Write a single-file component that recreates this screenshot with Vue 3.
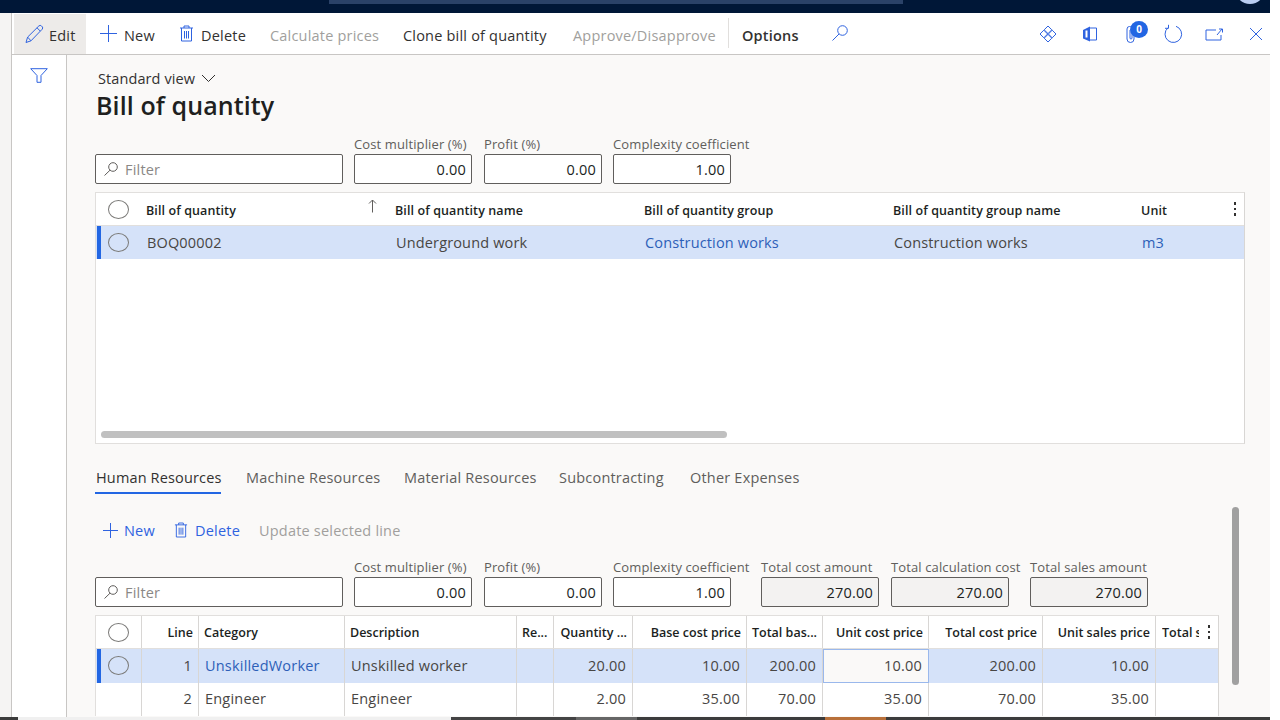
<script setup>
const tools = [
  { label: 'Calculate prices', off: true },
  { label: 'Clone bill of quantity' },
  { label: 'Approve/Disapprove', off: true },
]
const topCols = ['Bill of quantity name', 'Bill of quantity group', 'Bill of quantity group name']
const tabs = ['Human Resources', 'Machine Resources', 'Material Resources', 'Subcontracting', 'Other Expenses']
const fields = [
  { label: 'Cost multiplier (%)', value: '0.00' },
  { label: 'Profit (%)', value: '0.00' },
  { label: 'Complexity coefficient', value: '1.00' },
]
const totals = [
  { label: 'Total cost amount', value: '270.00' },
  { label: 'Total calculation cost', value: '270.00' },
  { label: 'Total sales amount', value: '270.00' },
]
const lineHead = [
  { t: 'Line', r: true }, { t: 'Category' }, { t: 'Description' }, { t: 'Re...' },
  { t: 'Quantity ...', r: true }, { t: 'Base cost price', r: true }, { t: 'Total bas...', r: true },
  { t: 'Unit cost price', r: true }, { t: 'Total cost price', r: true }, { t: 'Unit sales price', r: true },
]
const lines = [
  ['1', 'UnskilledWorker', 'Unskilled worker', '', '20.00', '10.00', '200.00', '10.00', '200.00', '10.00'],
  ['2', 'Engineer', 'Engineer', '', '2.00', '35.00', '70.00', '35.00', '70.00', '35.00'],
]
const numeric = (i) => i === 0 || i >= 4
</script>

<template>
  <div class="app">
    <header class="topbar"><span class="topsearch"></span><span class="avatar"></span></header>
    <div class="shell">
      <div class="strip"></div>
      <div class="page">
        <div class="toolbar">
          <div class="tools">
            <button class="tool edit">
              <svg width="20" height="20" viewBox="0 0 20 20"><path d="M2 18.500l1.600-5.400L14.800 2a1.900 1.900 0 0 1 2.700 0l.6.600a1.900 1.900 0 0 1 0 2.700L7 16.800zM3.600 13.100l3.400 3.700M13 3.800l3.300 3.300" /></svg>
              <span>Edit</span>
            </button>
            <button class="tool new">
              <svg width="19" height="19" viewBox="0 0 19 19"><path d="M9.500 1v17M1 9.500h17" /></svg>
              <span>New</span>
            </button>
            <button class="tool del">
              <svg width="15" height="17" viewBox="0 0 15 17"><path d="M1 3h13M5 3V1h5v2M2.500 3v13h10V3M5.500 6v7.500M7.500 6v7.500M9.500 6v7.500" /></svg>
              <span>Delete</span>
            </button>
            <button v-for="t in tools" :key="t.label" class="tool" :class="{ off: t.off }"><span>{{ t.label }}</span></button>
            <button class="tool opts"><span>Options</span></button>
            <button class="tool find">
              <svg width="18" height="18" viewBox="0 0 18 18"><circle cx="11.500" cy="6.500" r="4.800" /><path d="M8 10L1.500 16.500" /></svg>
            </button>
          </div>
          <div class="sysicons">
            <svg width="20" height="20" viewBox="0 0 20 20"><path d="M10 2l3.800 3.800L10 9.600 6.200 5.800zM14.200 6.200L18 10l-3.800 3.800L10.400 10zM5.800 6.200L9.600 10l-3.800 3.800L2 10zM10 10.400l3.800 3.800L10 18l-3.800-3.800z" /></svg>
            <svg width="20" height="20" viewBox="0 0 20 20"><path class="solid" d="M3 6l7-3.500v15L3 14.500z" /><path class="cutout" d="M6.500 6.500v7" /><path d="M10 4h6.500v12H10" /></svg>
            <div class="clip">
              <svg width="20" height="20" viewBox="0 0 20 20"><path d="M13 6v9a3.500 3.500 0 0 1-7 0V5a2.500 2.500 0 0 1 5 0v9a1 1 0 0 1-2 0V6" /></svg>
              <span class="badge">0</span>
            </div>
            <svg width="20" height="20" viewBox="0 0 20 20"><path d="M5 3.800A8.300 8.300 0 1 0 13 2.300M5.500 .8v3.500H2" /></svg>
            <svg width="20" height="20" viewBox="0 0 20 20"><path d="M12 6H2v10h15v-5M13 11l5-6M15 5h3.500v3.500" /></svg>
            <svg width="20" height="20" viewBox="0 0 20 20"><path d="M4 4l12 12M16 4L4 16" /></svg>
          </div>
        </div>

        <div class="body">
          <nav class="rail">
            <svg width="18" height="15" viewBox="0 0 18 15"><path d="M.7.7h16.600L11 7.500v6.800H7V7.500z" /></svg>
          </nav>
          <main class="content">
            <div class="viewname">
              <span>Standard view</span>
              <svg width="15" height="9" viewBox="0 0 15 9"><path d="M1 1l6.500 6.500L14 1" /></svg>
            </div>
            <h1>Bill of quantity</h1>

            <div class="filters first">
              <div class="field wide">
                <span class="lab"></span>
                <div class="input filter">
                  <svg width="16" height="16" viewBox="0 0 16 16"><circle cx="10" cy="6" r="4.300" /><path d="M7 9.200L1.500 14.500" /></svg>
                  <span>Filter</span>
                </div>
              </div>
              <div v-for="f in fields" :key="f.label" class="field">
                <span class="lab">{{ f.label }}</span>
                <div class="input num">{{ f.value }}</div>
              </div>
            </div>

            <section class="grid top">
              <div class="row head">
                <div class="chk"><i class="radio"></i></div>
                <div class="c sorted"><span>Bill of quantity</span><svg width="9" height="14" viewBox="0 0 9 14"><path d="M4.500 13.500V1M1 4.500L4.500 1 8 4.500" /></svg></div>
                <div v-for="c in topCols" :key="c" class="c">{{ c }}</div>
                <div class="c">Unit</div>
                <div class="kebab"><b></b><b></b><b></b></div>
              </div>
              <div class="row selected">
                <div class="chk"><i class="radio"></i></div>
                <div class="c">BOQ00002</div>
                <div class="c">Underground work</div>
                <div class="c link">Construction works</div>
                <div class="c">Construction works</div>
                <div class="c link">m3</div>
                <div></div>
              </div>
              <div class="hscroll"></div>
            </section>

            <div class="tabs">
              <span v-for="(t, i) in tabs" :key="t" class="tab" :class="{ active: i === 0 }">{{ t }}</span>
            </div>

            <div class="actions">
              <button class="act new2">
                <svg width="17" height="17" viewBox="0 0 17 17"><path d="M8.500 1v15M1 8.500h15" /></svg>
                <span>New</span>
              </button>
              <button class="act del2">
                <svg width="14" height="16" viewBox="0 0 15 17"><path d="M1 3h13M5 3V1h5v2M2.500 3v13h10V3M5.500 6v7.500M7.500 6v7.500M9.500 6v7.500" /></svg>
                <span>Delete</span>
              </button>
              <button class="act off">Update selected line</button>
            </div>

            <div class="filters second">
              <div class="field wide">
                <span class="lab"></span>
                <div class="input filter">
                  <svg width="16" height="16" viewBox="0 0 16 16"><circle cx="10" cy="6" r="4.300" /><path d="M7 9.200L1.500 14.500" /></svg>
                  <span>Filter</span>
                </div>
              </div>
              <div v-for="f in fields" :key="f.label" class="field">
                <span class="lab">{{ f.label }}</span>
                <div class="input num">{{ f.value }}</div>
              </div>
              <div v-for="f in totals" :key="f.label" class="field total">
                <span class="lab">{{ f.label }}</span>
                <div class="input num ro">{{ f.value }}</div>
              </div>
            </div>

            <section class="grid lines">
              <div class="lrow lhead">
                <div class="chk"><i class="radio"></i></div>
                <div v-for="h in lineHead" :key="h.t" class="lc" :class="{ right: h.r }">{{ h.t }}</div>
                <div class="lc last"><span class="cut">Total s</span><div class="kebab"><b></b><b></b><b></b></div></div>
              </div>
              <div v-for="(l, n) in lines" :key="n" class="lrow" :class="{ selected: n === 0 }">
                <div class="chk"><i v-if="n === 0" class="radio"></i></div>
                <div
                  v-for="(v, i) in l" :key="i" class="lc"
                  :class="{ right: numeric(i), link: n === 0 && i === 1, focus: n === 0 && i === 7 }"
                >{{ v }}</div>
                <div class="lc"></div>
              </div>
            </section>
            <div class="vscroll"></div>
          </main>
        </div>
      </div>
    </div>
    <footer class="taskbar">
      <i class="s1"></i><i class="s2"></i><i class="s3"></i><i class="s4"></i><i class="s5"></i><i class="s6"></i><i class="s7"></i>
    </footer>
  </div>
</template>

<style>
html, body { margin: 0; background: #fff; }
</style>

<style scoped>
* { box-sizing: border-box; }
.app {
  width: 1270px; height: 720px; display: flex; flex-direction: column; overflow: hidden;
  font-family: "Open Sans", "Noto Sans", sans-serif; font-size: 14.500px; letter-spacing: .2px; color: #323130;
}
svg { fill: none; stroke: #2f63e0; stroke-width: 1; display: block; flex: none; }
button { all: unset; box-sizing: border-box; display: flex; align-items: center; font: inherit; letter-spacing: inherit; white-space: nowrap; }

.topbar { height: 13px; background: #001737; position: relative; flex: none; overflow: hidden; }
.topsearch { position: absolute; left: 329px; top: 0; width: 574px; height: 4px; background: #2a4268; }
.avatar { position: absolute; left: 1235px; top: -26px; width: 30px; height: 30px; border-radius: 50%; background: #b9cdf2; }

.shell { flex: 1; min-height: 0; display: flex; }
.strip { width: 12px; background: #f5f4f3; border-right: 1px solid #c8c6c4; flex: none; }
.page { flex: 1; min-width: 0; display: flex; flex-direction: column; }

.toolbar { height: 42px; background: #fff; border-bottom: 1px solid #c8c6c4; display: flex; justify-content: space-between; flex: none; }
.tools { display: grid; grid-template-columns: 2px 72px 93px 91px 133px 170px 155px 103px 40px; height: 41px; }
.tools::before { content: ""; }
.tool { color: #323130; height: 41px; padding-top: 3px; }
.edit { background: #edebe9; padding-left: 10px; gap: 5px; margin-top: 1px; height: 40px; padding-top: 2px; }
.edit svg { margin-top: -2px; }
.new { padding-left: 13px; gap: 6px; }
.new svg, .del svg { margin-top: -3px; }
.del { padding-left: 0; gap: 7px; }
.off { color: #a19f9d; }
.opts { font-weight: 600; padding-left: 14px; position: relative; }
.opts::before { content: ""; position: absolute; left: 0; top: 5px; height: 30px; width: 1px; background: #e1dfdd; }
.find svg { margin-top: -5px; }
.sysicons { display: flex; align-items: center; gap: 21.600px; padding-right: 4px; height: 41px; }
.sysicons .solid { fill: #2f63e0; stroke: none; }
.sysicons .cutout { stroke: #fff; stroke-width: 2; }
.clip { position: relative; width: 20px; height: 20px; }
.badge {
  position: absolute; left: 9px; top: -3px; width: 18px; height: 17px; border-radius: 50%; letter-spacing: 0;
  background: #2266e3; color: #fff; font-size: 10px; font-weight: 700; line-height: 17px; text-align: center;
}

.body { flex: 1; min-height: 0; display: flex; }
.rail { width: 55px; background: #fff; border-right: 1px solid #c8c6c4; flex: none; padding: 13px 0 0 18px; }
.content { flex: 1; min-width: 0; background: #faf9f8; padding: 13px 0 0 28px; position: relative; overflow: hidden; }

.viewname { height: 20px; display: flex; align-items: center; gap: 6px; padding-left: 3px; letter-spacing: .1px; }
.viewname svg { stroke: #323130; }
h1 { margin: 0; padding-left: 1px; height: 35px; line-height: 34px; font-size: 25px; letter-spacing: .1px; font-weight: 600; color: #201f1e; }

.filters { display: flex; }
.first { margin-top: 12px; }
.second { margin-top: 13px; }
.field { width: 118px; margin-right: 12px; display: flex; flex-direction: column; }
.field:nth-child(3) { margin-right: 11px; }
.field:nth-child(4) { margin-right: 30px; }
.field.wide { width: 248px; margin-right: 11px; }
.field.total:nth-child(5) { margin-right: 12px; }
.field.total:nth-child(6) { margin-right: 21px; }
.lab { height: 19px; font-size: 13px; letter-spacing: .12px; line-height: 19px; font-weight: 500; color: #605e5c; white-space: nowrap; }
.input { height: 30px; background: #fff; border: 1px solid #605e5c; border-radius: 2px; display: flex; align-items: center; }
.num { justify-content: flex-end; padding-right: 5px; color: #201f1e; }
.ro { background: #f3f2f1; }
.filter { color: #8a8886; padding-left: 7px; gap: 6px; }
.filter span { padding-top: 1px; }
.filter svg { stroke: #605e5c; margin-top: -1px; }

.grid { background: #fff; border: 1px solid #e1dfdd; border-right-color: #d8d6d4; position: relative; }
.top { margin-top: 8px; width: 1150px; height: 252px; }
.row { display: grid; grid-template-columns: 50px 249px 249px 249px 248px 1fr 18px; align-items: center; }
.head { height: 33px; border-bottom: 1px solid #e1dfdd; font-size: 12.500px; letter-spacing: .1px; font-weight: 600; color: #201f1e; }
.head .c { padding-top: 2px; }
.row.selected { height: 33px; }
.selected { background: #d5e2f9; position: relative; color: #484644; }
.selected::before { content: ""; position: absolute; left: 1px; top: 0; bottom: 0; width: 3.500px; background: #2266e3; }
.chk { display: flex; justify-content: center; align-items: center; height: 100%; }
.row .chk { padding-right: 5px; }
.radio { display: block; width: 21px; height: 19px; border-radius: 50%; border: 1px solid #7a7977; background: transparent; }
.link { color: #2d5fb8; }
.c { white-space: nowrap; }
.selected .c { padding-left: 1px; padding-bottom: 1px; letter-spacing: .15px; }
.sorted { display: flex; justify-content: space-between; padding-right: 18px; }
.head .sorted svg { stroke: #605e5c; margin-top: -3px; }
.kebab { display: flex; flex-direction: column; align-items: center; gap: 3px; }
.kebab b { width: 2px; height: 2.500px; background: #323130; display: block; }
.hscroll { position: absolute; left: 5px; top: 238px; width: 626px; height: 7px; border-radius: 4px; background: #c0c0c0; }

.tabs { margin-top: 22px; height: 28px; display: flex; color: #605e5c; }
.tab { width: 125px; margin-right: 25px; padding-left: 1px; line-height: 24px; white-space: nowrap; }
.tab:nth-child(2) { width: 134px; margin-right: 24px; }
.tab:nth-child(3) { width: 131px; margin-right: 24px; }
.tab:nth-child(4) { width: 106px; margin-right: 25px; }
.tab.active { color: #323130; border-bottom: 2px solid #2266e3; width: 126px; margin-right: 24px; letter-spacing: .15px; }

.actions { margin-top: 21px; height: 30px; display: flex; align-items: center; }
.act { color: #2f63e0; gap: 5px; }
.act.off { color: #a19f9d; }
.new2 { margin-left: 7px; width: 72px; }
.del2 { width: 85px; gap: 7px; }

.lines { margin-top: 8px; width: 1124px; border-bottom: none; }
.lrow { display: grid; grid-template-columns: 46px 57px 146px 172px 37px 79px 114px 76px 106px 114px 113px 1fr; height: 33.500px; }
.lrow > * { border-right: 1px solid #d8d6d4; }
.lrow > *:last-child { border-right: none; }
.lhead { height: 33px; border-bottom: 1px solid #e1dfdd; }
.lc { display: flex; align-items: center; padding: 0 6px 1px 6px; white-space: nowrap; overflow: hidden; color: #484644; }
.lhead .lc { color: #201f1e; font-size: 12.500px; letter-spacing: 0; font-weight: 600; padding: 0 5px 0 5px; }
.right { justify-content: flex-end; }
.lc.link { color: #2d5fb8; }
.lc.focus { background: #faf9f8; border: 1px solid #9ab8ec; }
.lhead .last { justify-content: space-between; padding: 0 8px 0 6px; }
.cut { width: 37px; overflow: hidden; }

.vscroll { position: absolute; left: 1165px; top: 452px; width: 7px; height: 178px; border-radius: 4px; background: #a0a0a0; }

.taskbar { height: 3px; display: flex; flex: none; }
.taskbar i { display: block; height: 3px; }
.s1 { width: 18px; background: #3c3c3c; }
.s2 { width: 433px; background: #f0f0f0; }
.s3 { width: 125px; background: #444; }
.s4 { width: 61px; background: #666; }
.s5 { width: 188px; background: #3c3c3c; }
.s6 { width: 61px; background: #b8703a; }
.s7 { flex: 1; background: #3c3c3c; }
</style>
